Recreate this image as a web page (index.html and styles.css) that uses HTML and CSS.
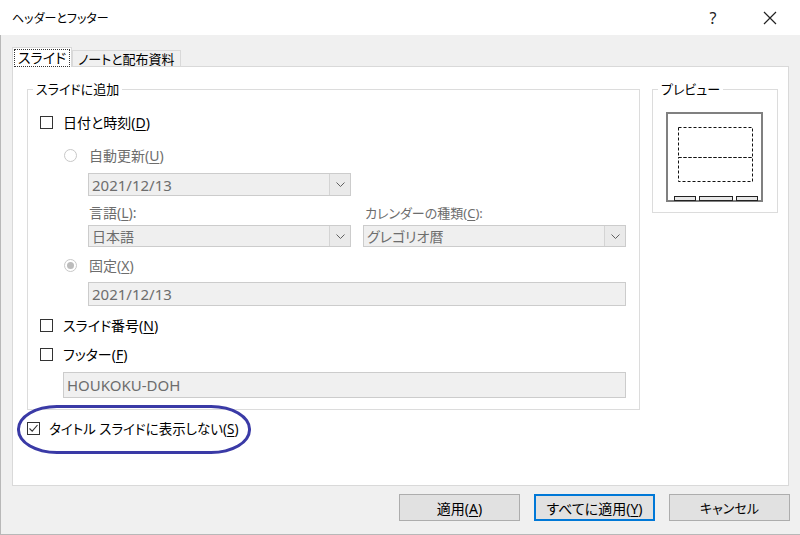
FILE: index.html
```html
<!DOCTYPE html>
<html lang="ja">
<head>
<meta charset="utf-8">
<title>ヘッダーとフッター</title>
<link rel="stylesheet" href="styles.css">
</head>
<body>
<div class="titlebar">
  <span class="title">ヘッダーとフッター</span>
  <div class="caption">
    <span class="help">?</span>
    <span class="close"><svg width="14" height="14" viewBox="0 0 14 14"><path d="M1 1 L13 13 M13 1 L1 13" stroke="#222" stroke-width="1.2" fill="none"/></svg></span>
  </div>
</div>
<div class="client">
  <div class="tabs">
    <div class="tab active"><span class="focus">スライド</span></div>
    <div class="tab">ノートと配布資料</div>
  </div>
  <div class="panel">
    <div class="left-col">
      <fieldset class="group main-group">
        <legend>スライドに追加</legend>
        <div class="group-body">
          <div class="row r-cb1"><span class="cb"></span><span class="lbl">日付と時刻(<u>D</u>)</span></div>
          <div class="row r-radio1 ind1"><span class="radio"></span><span class="lbl dis">自動更新(<u>U</u>)</span></div>
          <div class="row r-combo1 ind2">
            <div class="combo w263"><span class="ctext">2021/12/13</span><span class="dd"><svg width="9" height="5" viewBox="0 0 9 5"><path d="M0.5 0.5 L4.5 4.5 L8.5 0.5" stroke="#606060" fill="none"/></svg></span></div>
          </div>
          <div class="row r-labels ind2">
            <span class="lbl dis l-lang">言語(<u>L</u>):</span>
            <span class="lbl dis l-cal">カレンダーの種類(<u>C</u>):</span>
          </div>
          <div class="row r-combos ind2">
            <div class="combo w263 h22"><span class="ctext jp">日本語</span><span class="dd"><svg width="9" height="5" viewBox="0 0 9 5"><path d="M0.5 0.5 L4.5 4.5 L8.5 0.5" stroke="#606060" fill="none"/></svg></span></div>
            <div class="combo w263 h22"><span class="ctext jp">グレゴリオ暦</span><span class="dd"><svg width="9" height="5" viewBox="0 0 9 5"><path d="M0.5 0.5 L4.5 4.5 L8.5 0.5" stroke="#606060" fill="none"/></svg></span></div>
          </div>
          <div class="row r-radio2 ind1"><span class="radio on"></span><span class="lbl dis">固定(<u>X</u>)</span></div>
          <div class="row r-text1 ind2"><div class="textbox w538 h24">2021/12/13</div></div>
          <div class="row r-cb2"><span class="cb"></span><span class="lbl">スライド番号(<u>N</u>)</span></div>
          <div class="row r-cb3"><span class="cb"></span><span class="lbl">フッター(<u>F</u>)</span></div>
          <div class="row r-text2 ind3"><div class="textbox w563 h26">HOUKOKU-DOH</div></div>
        </div>
      </fieldset>
      <div class="row r-cb4">
        <span class="cb checked"><svg width="11" height="11" viewBox="0 0 11 11"><path d="M1.5 5.5 L4.2 8.2 L9.5 2" stroke="#333" stroke-width="1.1" fill="none"/></svg></span>
        <span class="lbl">タイトル スライドに表示しない(<u>S</u>)</span>
      </div>
    </div>
    <fieldset class="group preview-group">
      <legend>プレビュー</legend>
      <svg class="preview" width="97" height="90" viewBox="0 0 97 90">
        <rect x="1" y="1" width="95" height="88" fill="#fff" stroke="#808080" stroke-width="2"/>
        <rect x="12.5" y="15.5" width="74" height="30" fill="none" stroke="#111" stroke-dasharray="3 2"/>
        <rect x="12.5" y="45.5" width="74" height="24" fill="none" stroke="#111" stroke-dasharray="3 2"/>
        <rect x="8.5" y="84.5" width="21" height="4" fill="#e8e8e8" stroke="#222"/>
        <rect x="33.5" y="84.5" width="33" height="4" fill="#e8e8e8" stroke="#222"/>
        <rect x="70.5" y="84.5" width="21" height="4" fill="#e8e8e8" stroke="#222"/>
      </svg>
    </fieldset>
  </div>
  <div class="buttons">
    <button class="btn">適用(<u>A</u>)</button>
    <button class="btn default">すべてに適用(<u>Y</u>)</button>
    <button class="btn kana">キャンセル</button>
  </div>
</div>
<div class="highlight"></div>
</body>
</html>
```
FILE: styles.css
```css
* { box-sizing: border-box; }
html, body { margin: 0; padding: 0; }
body {
  width: 800px;
  height: 535px;
  overflow: hidden;
  position: relative;
  font-family: "Noto Sans", "Noto Sans CJK JP", sans-serif;
  font-size: 13px;
  font-feature-settings: "palt";
  color: #000;
  background: #fff;
}
u { text-decoration: underline; text-underline-offset: 2px; }

.titlebar {
  height: 35px;
  background: #fff;
  display: flex;
  align-items: center;
  padding-left: 12px;
}
.title { font-size: 12px; color: #000; }
.caption { margin-left: auto; display: flex; align-items: center; padding-right: 15px; }
.help { width: 30px; text-align: center; font-size: 16px; color: #222; }
.close { width: 30px; margin-left: 27px; display: flex; justify-content: center; }

.client {
  height: 500px;
  background: #f0f0f0;
  border-left: 1px solid #b8b8b8;
  border-bottom: 1px solid #b8b8b8;
  padding: 12px 11px 0 11px;
}
.tabs { display: flex; align-items: flex-end; height: 19px; }
.tab {
  height: 16px;
  padding: 0 5px;
  border: 1px solid #d9d9d9;
  border-bottom: none;
  background: #f0f0f0;
  display: flex;
  align-items: center;
  font-size: 13px;
  line-height: 14px;
  white-space: nowrap;
}
.tab.active {
  height: 20px;
  background: #fff;
  margin-bottom: -1px;
  position: relative;
  z-index: 1;
  padding: 0 1px;
}
.focus { border: 1px dotted #333; padding: 1px 3px; line-height: 14px; font-size: 14px; }

.panel {
  height: 420px;
  background: #fff;
  border: 1px solid #d9d9d9;
  padding: 13px 0 0 14px;
  display: flex;
  gap: 12px;
}
.left-col { width: 613px; }
.group {
  margin: 0;
  padding: 0;
  border: 1px solid #dcdcdc;
  min-width: 0;
}
.group legend {
  margin-left: 5px;
  padding: 0 3px;
  line-height: 18px;
  font-size: 13px;
}
.main-group { width: 613px; height: 330px; }
.group-body { padding-left: 12px; }

.row { display: flex; align-items: center; }
.ind1 { padding-left: 24px; }
.ind2 { padding-left: 48px; }
.ind3 { padding-left: 23px; }
.r-cb1 { margin-top: 12px; height: 24px; }
.r-radio1 { margin-top: 9px; height: 24px; }
.r-combo1 { margin-top: 6px; height: 23px; }
.r-labels { margin-top: 6px; height: 20px; }
.r-combos { margin-top: 3px; height: 22px; gap: 12px; }
.r-radio2 { margin-top: 6px; height: 24px; }
.r-text1 { margin-top: 5px; height: 24px; }
.r-cb2 { margin-top: 7px; height: 24px; }
.r-cb3 { margin-top: 5px; height: 24px; }
.r-text2 { margin-top: 6px; height: 26px; }
.r-cb4 { margin-top: 6px; height: 24px; }

.cb {
  width: 13px;
  height: 13px;
  border: 1px solid #333;
  background: #fff;
  flex: none;
  display: flex;
  align-items: center;
  justify-content: center;
}
.lbl { margin-left: 10px; font-size: 14px; white-space: nowrap; }
.r-cb4 .lbl { margin-left: 9px; font-size: 13.5px; }
.lbl.dis { color: #6d6d6d; }
.radio {
  width: 13px;
  height: 13px;
  border-radius: 50%;
  border: 1px solid #c8c8c8;
  background: #fff;
  flex: none;
  position: relative;
}
.radio.on::after {
  content: "";
  position: absolute;
  left: 2px; top: 2px;
  width: 7px; height: 7px;
  border-radius: 50%;
  background: #bcbcbc;
}
.ind1 .lbl { margin-left: 12px; }
.r-labels .lbl { margin-left: 1px; }
.l-lang { width: 275px; }
.r-labels .l-cal { font-size: 13px; }

.combo {
  height: 23px;
  background: #efefef;
  border: 1px solid #cccccc;
  display: flex;
  align-items: center;
  justify-content: space-between;
}
.w263 { width: 263px; }
.h22 { height: 22px; }
.ctext { padding-left: 3px; color: #6d6d6d; font-size: 15px; }
.ctext.jp { font-size: 14px; }
.dd {
  width: 21px;
  height: 100%;
  border-left: 1px solid #d4d4d4;
  background: #eaeaea;
  display: flex;
  align-items: center;
  justify-content: center;
}
.textbox {
  background: #f0f0f0;
  border: 1px solid #cccccc;
  color: #6d6d6d;
  font-size: 15px;
  display: flex;
  align-items: center;
  padding-left: 3px;
}
.w538 { width: 538px; }
.w563 { width: 563px; }
.h24 { height: 24px; }
.h26 { height: 26px; }

.preview-group { width: 126px; height: 133px; }
.preview { display: block; margin: 14px 0 0 13px; }

.buttons {
  margin-top: 8px;
  margin-right: -1px;
  display: flex;
  justify-content: flex-end;
  gap: 14px;
}
.btn {
  width: 121px;
  height: 27px;
  background: #e1e1e1;
  border: 1px solid #adadad;
  font-family: "Noto Sans", "Noto Sans CJK JP", sans-serif;
  font-size: 14px;
  font-feature-settings: "palt";
  color: #000;
  padding: 0;
}
.btn.kana { font-size: 13px; }
.btn.default { border: 2px solid #0078d7; }

.highlight {
  position: absolute;
  left: 17px;
  top: 405px;
  width: 234px;
  height: 49px;
  border: 3px solid #3a3aa6;
  border-radius: 40px / 24px;
  pointer-events: none;
}
```
